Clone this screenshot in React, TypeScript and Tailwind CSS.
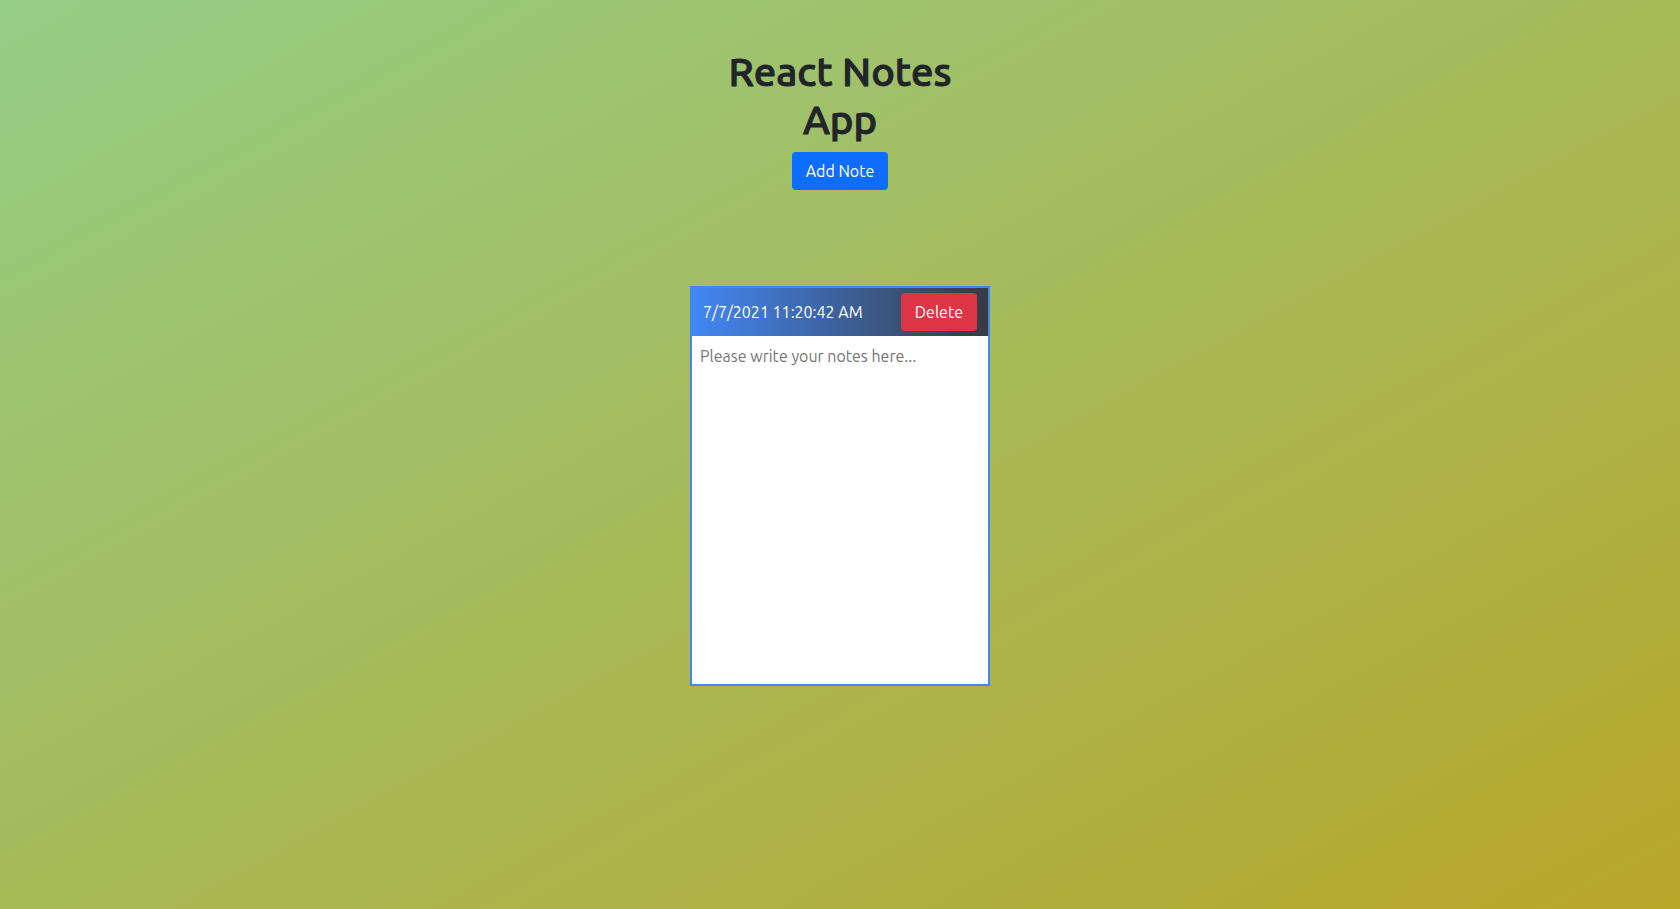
import { useState } from "react";

type Note = { id: number; created: string; text: string };

function NoteCard({
  note,
  onChange,
  onDelete,
}: {
  note: Note;
  onChange: (text: string) => void;
  onDelete: () => void;
}) {
  return (
    <article className="flex h-[400px] w-[300px] flex-col border-2 border-[#4287f5] bg-white">
      <header className="flex items-center justify-between bg-linear-to-r/srgb from-[#4287f5] to-[#373a40] px-[11px] py-[5px] text-white">
        <label htmlFor={`note-${note.id}`}>{note.created}</label>
        <button
          type="button"
          onClick={onDelete}
          className="h-[38px] rounded-sm bg-[#dc3545] px-3.5"
        >
          Delete
        </button>
      </header>
      <textarea
        id={`note-${note.id}`}
        value={note.text}
        onChange={(event) => onChange(event.target.value)}
        placeholder="Please write your notes here..."
        className="w-full grow resize-none p-2 text-[#212529] outline-none placeholder:text-[#757575]"
      />
    </article>
  );
}

export default function App() {
  const [notes, setNotes] = useState<Note[]>([
    { id: 1, created: "7/7/2021 11:20:42 AM", text: "" },
  ]);

  const addNote = () =>
    setNotes([
      ...notes,
      { id: Date.now(), created: new Date().toLocaleString("en-US").replace(",", ""), text: "" },
    ]);

  return (
    <main className="flex min-h-screen flex-col items-center bg-linear-to-br/srgb from-[#95cd85] to-[#b8a62a] pt-12 font-[Ubuntu,'Noto_Sans',sans-serif] text-base leading-6">
      <div className="flex w-[276px] flex-col items-center gap-2">
        <h1 className="text-center text-[40px] leading-12 font-medium text-[#212529] [-webkit-text-stroke:1px_#212529]">
          React Notes App
        </h1>
        <button
          type="button"
          onClick={addNote}
          className="h-[38px] rounded-sm bg-[#0d6efd] px-3.5 text-white"
        >
          Add Note
        </button>
      </div>
      <div className="mt-24 flex flex-wrap justify-center gap-8">
        {notes.map((note) => (
          <NoteCard
            key={note.id}
            note={note}
            onChange={(text) =>
              setNotes(notes.map((item) => (item.id === note.id ? { ...item, text } : item)))
            }
            onDelete={() => setNotes(notes.filter((item) => item.id !== note.id))}
          />
        ))}
      </div>
    </main>
  );
}
